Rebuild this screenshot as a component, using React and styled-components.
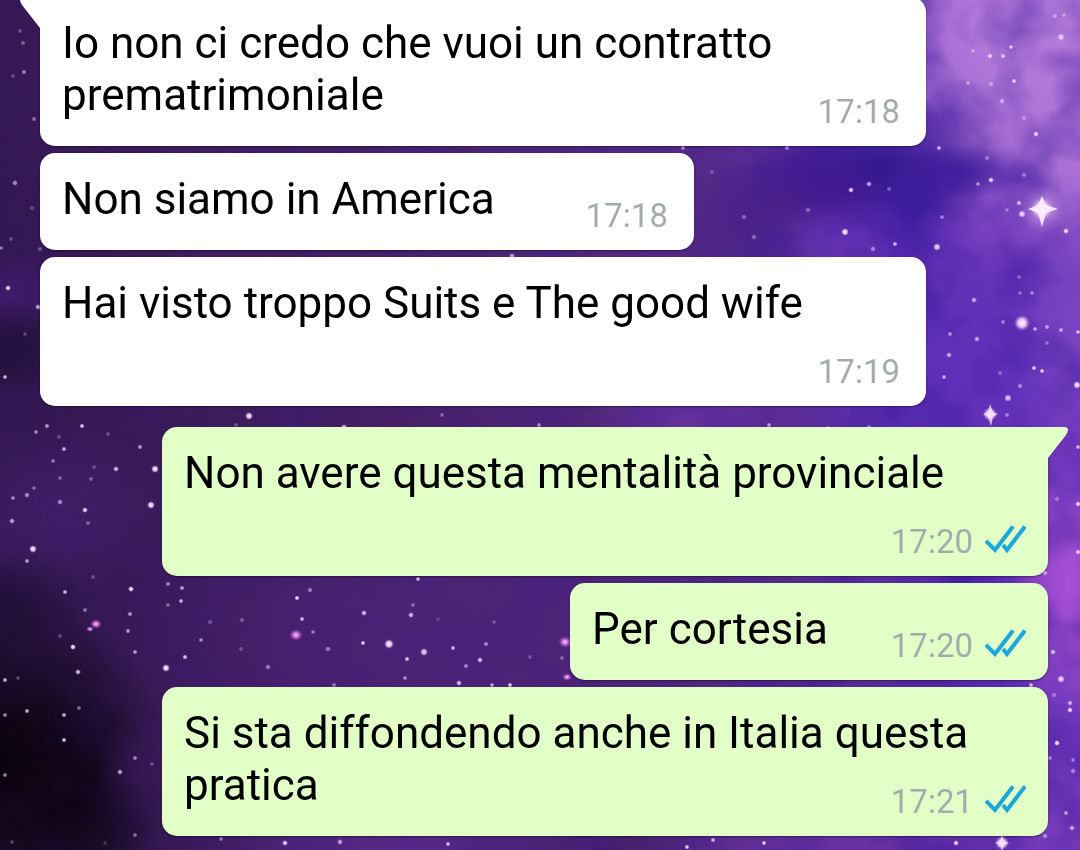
// src/App.jsx
import React from 'react';
import styled, { createGlobalStyle } from 'styled-components';

const GlobalStyle = createGlobalStyle`
  *, *::before, *::after { box-sizing: border-box; }
  body {
    margin: 0;
    background: #3a1a58;
    font-family: Roboto, 'Liberation Sans', sans-serif;
    overflow: hidden;
  }
`;

const Wallpaper = styled.svg`
  position: fixed;
  inset: 0;
  width: 100%;
  height: 100%;
`;

const Chat = styled.main`
  position: relative;
  display: flex;
  flex-direction: column;
  gap: 21px;
  padding: 0 32px 14px 40px;
  margin-top: -3px; /* scrolled slightly past the first bubble */
`;

const Group = styled.section`
  display: flex;
  flex-direction: column;
  align-items: ${({ $sent }) => ($sent ? 'flex-end' : 'flex-start')};
  gap: 7px;
`;

const Bubble = styled.article`
  position: relative;
  display: flow-root;
  max-width: calc(100% - 122px);
  padding: ${({ $sent }) => ($sent ? '20px 22px 25px 22px' : '20px 26px 25px 22px')};
  border-radius: 15px;
  border-top-left-radius: ${({ $tail, $sent }) => ($tail && !$sent ? '0' : '15px')};
  border-top-right-radius: ${({ $tail, $sent }) => ($tail && $sent ? '0' : '15px')};
  background: ${({ $sent }) => ($sent ? '#e1ffc7' : '#ffffff')};
  box-shadow: 0 1px 2px rgba(0, 0, 0, 0.4);
`;

const Tail = styled.svg`
  position: absolute;
  top: 0;
  width: 21px;
  height: 32px;
  fill: ${({ $sent }) => ($sent ? '#e1ffc7' : '#ffffff')};
  ${({ $sent }) => ($sent ? 'left: calc(100% - 1px);' : 'right: calc(100% - 1px); transform: scaleX(-1);')}
`;

const Text = styled.p`
  margin: 0;
  color: #000;
  font-size: 44px;
  line-height: 52px;
`;

const Meta = styled.span`
  float: right;
  display: flex;
  align-items: center;
  gap: 12px;
  margin: 23px 0 -11px ${({ $sent }) => ($sent ? '63px' : '91px')};
  color: #a3abab;
  font-size: 33px;
  line-height: 40px;
`;

const Ticks = styled.svg`
  width: 41px;
  height: 34px;
  fill: none;
  stroke: #1ba6dc;
  stroke-width: 4;
`;

const groups = [
  {
    sent: false,
    messages: [
      { text: 'Io non ci credo che vuoi un contratto prematrimoniale', time: '17:18' },
      { text: 'Non siamo in America', time: '17:18' },
      { text: 'Hai visto troppo Suits e The good wife', time: '17:19' },
    ],
  },
  {
    sent: true,
    messages: [
      { text: 'Non avere questa mentalità provinciale', time: '17:20' },
      { text: 'Per cortesia', time: '17:20' },
      { text: 'Si sta diffondendo anche in Italia questa pratica', time: '17:21' },
    ],
  },
];

// cx, cy, rx, ry, color, opacity
const clouds = [
  [1040, 30, 300, 210, '#c084e0', 1],
  [1080, 150, 150, 130, '#b478d8', 0.8],
  [880, 165, 130, 75, '#2f148c', 0.95],
  [960, 172, 60, 28, '#38189a', 0.8],
  [912, 225, 45, 50, '#34189c', 0.8],
  [1015, 180, 40, 22, '#5a2cae', 0.7],
  [1080, 90, 30, 36, '#7040b4', 0.8],
  [1058, 62, 40, 16, '#8d54c4', 0.6],
  [930, 120, 50, 30, '#542aa8', 0.7],
  [800, 195, 90, 50, '#44188a', 0.8],
  [740, 225, 90, 60, '#4c2382', 0.7],
  [850, 240, 80, 45, '#6a34bc', 0.7],
  [985, 235, 80, 45, '#8444c4', 0.6],
  [960, 360, 190, 150, '#6030bc', 0.8],
  [1070, 330, 60, 120, '#8048c4', 0.7],
  [1070, 580, 60, 170, '#a850d4', 1],
  [1070, 470, 50, 50, '#6a35bc', 0.7],
  [1060, 735, 50, 50, '#6530b4', 0.8],
  [1080, 830, 90, 80, '#8b45c4', 0.8],
  [700, 415, 110, 50, '#7038a4', 0.8],
  [440, 635, 330, 180, '#50247a', 0.8],
  [560, 850, 180, 50, '#3c1a64', 0.6],
  [400, 850, 220, 60, '#5a2a8c', 0.9],
  [850, 850, 210, 60, '#6e34a8', 0.8],
  [10, 295, 50, 45, '#401c6e', 0.9],
  [10, 350, 90, 50, '#211038', 0.9],
  [60, 510, 120, 90, '#43206c', 0.8],
  [0, 600, 90, 50, '#21103a', 0.9],
  [0, 760, 170, 170, '#080208', 1],
  [70, 800, 100, 110, '#0e0414', 0.9],
  [145, 770, 50, 60, '#3d1b5c', 0.7],
];

// x, y, radius, brightness
const stars = [
  [20, 31, 2, 0.3], [23, 43, 2, 0.4], [24, 72, 2, 0.6], [13, 76, 2, 0.3], [34, 119, 2, 0.5],
  [15, 183, 3, 0.6], [32, 208, 2, 0.3], [11, 239, 2, 0.3], [1, 248, 2, 0.5], [8, 288, 3, 0.9],
  [38, 307, 3, 0.7], [25, 334, 2, 0.3], [5, 377, 2, 0.8], [40, 249, 2, 0.4],
  [47, 426, 2, 0.7], [36, 432, 2, 0.6], [82, 426, 2, 0.9], [64, 449, 2, 0.8], [59, 437, 2, 0.3],
  [108, 434, 2, 0.3], [140, 447, 2, 0.7], [53, 461, 2, 0.5], [94, 467, 2, 0.3], [116, 469, 3, 0.8],
  [155, 469, 4, 1], [60, 478, 2, 0.4], [91, 479, 2, 0.4], [27, 495, 3, 0.6], [34, 488, 2, 0.4],
  [13, 498, 2, 0.6], [60, 502, 3, 0.6], [85, 510, 3, 0.9], [151, 505, 4, 1], [12, 521, 3, 0.7],
  [88, 523, 2, 0.4], [33, 549, 4, 1], [27, 561, 2, 0.7], [65, 592, 2, 0.8], [131, 589, 3, 1],
  [93, 577, 2, 0.3], [85, 610, 2, 0.5], [130, 614, 2, 0.7], [128, 631, 2, 0.7], [60, 636, 2, 0.3],
  [73, 647, 3, 1], [135, 652, 2, 0.7], [78, 672, 3, 0.8], [5, 680, 2, 0.8], [18, 678, 2, 0.3],
  [27, 711, 2, 0.8], [5, 715, 2, 0.6], [64, 715, 2, 0.8], [79, 708, 2, 0.5], [64, 740, 2, 0.9],
  [5, 775, 2, 0.6], [135, 758, 2, 0.6], [120, 772, 3, 0.7], [152, 764, 2, 0.3], [135, 835, 2, 0.5],
  [12, 842, 2, 0.3], [168, 584, 2, 0.6], [182, 588, 2, 0.7], [181, 601, 2, 0.8], [168, 605, 2, 0.4],
  [210, 622, 3, 0.3], [242, 620, 3, 0.3], [201, 640, 2, 0.6], [185, 657, 2, 0.9], [166, 668, 4, 1],
  [241, 649, 2, 0.3], [268, 667, 3, 0.5], [310, 590, 3, 0.5], [297, 598, 2, 1], [302, 619, 2, 0.8],
  [313, 632, 2, 0.5], [328, 649, 3, 0.5], [364, 613, 3, 0.8], [363, 643, 2, 0.9], [389, 644, 5, 1],
  [413, 605, 2, 0.4], [411, 615, 3, 0.8], [407, 659, 2, 0.9], [424, 652, 4, 0.9], [405, 678, 2, 0.6],
  [418, 579, 2, 0.8], [453, 648, 2, 0.8], [480, 660, 3, 0.8], [486, 644, 2, 0.6], [466, 666, 2, 0.6],
  [459, 683, 3, 0.8], [494, 622, 2, 0.3], [510, 685, 2, 0.9], [492, 685, 2, 0.7], [530, 657, 2, 0.3],
  [562, 658, 2, 0.4], [334, 685, 2, 0.5], [438, 619, 2, 0.2], [249, 416, 4, 1], [344, 427, 3, 0.8],
  [487, 429, 2, 0.4], [539, 425, 2, 0.6], [236, 425, 2, 0.3], [442, 415, 2, 0.4], [769, 425, 2, 0.7],
  [828, 428, 2, 0.5], [869, 427, 2, 0.5], [479, 429, 2, 0.6], [512, 256, 3, 0.7], [683, 148, 2, 0.6],
  [787, 148, 2, 0.6], [712, 172, 2, 0.3], [851, 190, 3, 0.9], [869, 184, 3, 0.7], [889, 189, 2, 0.4],
  [808, 210, 3, 0.4], [744, 217, 3, 0.4], [754, 237, 3, 0.4], [845, 232, 4, 1], [895, 244, 2, 0.8],
  [873, 249, 3, 0.5], [937, 247, 4, 0.9], [942, 217, 2, 0.5], [1061, 37, 4, 0.8], [1055, 16, 3, 0.5],
  [1064, 15, 2, 0.5], [973, 51, 2, 0.5], [990, 56, 3, 0.9], [1003, 56, 3, 0.7], [1011, 47, 2, 0.8],
  [968, 83, 2, 0.6], [991, 84, 3, 0.5], [1014, 81, 2, 0.9], [1002, 101, 3, 0.6], [1024, 118, 3, 0.4],
  [1036, 134, 3, 0.9], [939, 148, 2, 0.8], [987, 158, 3, 0.4], [991, 180, 3, 0.9], [978, 184, 2, 0.6],
  [1024, 175, 3, 0.4], [1019, 203, 3, 0.7], [1022, 214, 4, 0.9], [1007, 210, 2, 0.4], [1066, 231, 3, 1],
  [1019, 277, 2, 0.4], [1020, 293, 2, 0.4], [1032, 293, 2, 0.5], [974, 300, 3, 0.7], [1022, 323, 8, 1],
  [1003, 322, 2, 0.5], [1035, 329, 2, 0.7], [1047, 327, 2, 0.7], [1061, 330, 2, 0.7], [1078, 332, 2, 0.8],
  [1047, 343, 2, 0.4], [950, 334, 2, 0.6], [977, 339, 3, 0.7], [949, 355, 3, 0.7], [944, 377, 2, 0.7],
  [1034, 368, 2, 0.9], [1042, 371, 2, 0.9], [1000, 373, 2, 0.4], [1020, 386, 3, 0.5], [1008, 398, 4, 0.8],
  [1077, 385, 4, 1], [990, 414, 7, 1], [1007, 415, 2, 0.5], [1078, 447, 2, 0.8], [1057, 499, 3, 0.4],
  [1078, 504, 3, 0.9], [1078, 552, 3, 0.8], [1045, 573, 3, 0.6], [1053, 652, 3, 0.8], [1061, 679, 4, 0.9],
  [1070, 703, 3, 0.7], [1070, 710, 3, 0.9], [1054, 695, 3, 0.4], [1057, 743, 3, 1], [1073, 760, 2, 0.5],
  [1073, 771, 3, 0.5], [1050, 758, 2, 0.5], [1066, 813, 2, 0.7], [1072, 828, 3, 0.7], [1045, 836, 3, 0.5],
  [1031, 685, 2, 0.8], [285, 843, 3, 0.9], [340, 842, 3, 0.7], [448, 844, 2, 0.8], [221, 839, 2, 0.5],
  [687, 847, 2, 0.9], [713, 840, 2, 0.8], [764, 843, 2, 0.9], [956, 843, 3, 0.9], [1002, 843, 7, 1],
  [105, 843, 2, 0.2],
];

const pinkStars = [
  [96, 624, 5], [90, 629, 3], [296, 635, 6], [565, 642, 6], [567, 677, 4],
];

function GalaxyWallpaper() {
  return (
    <Wallpaper viewBox="0 0 1080 850" preserveAspectRatio="xMidYMid slice" aria-hidden="true">
      <defs>
        <linearGradient id="sky" x1="0" y1="0.3" x2="1" y2="0.15">
          <stop offset="0" stopColor="#331850" />
          <stop offset="0.35" stopColor="#472069" />
          <stop offset="0.65" stopColor="#562b88" />
          <stop offset="0.82" stopColor="#5a2cae" />
          <stop offset="1" stopColor="#7a40c0" />
        </linearGradient>
        {clouds.map(([, , , , color, opacity], i) => (
          <radialGradient id={`cloud${i}`} key={i}>
            <stop offset="0" stopColor={color} stopOpacity={opacity} />
            <stop offset="0.5" stopColor={color} stopOpacity={opacity * 0.6} />
            <stop offset="1" stopColor={color} stopOpacity="0" />
          </radialGradient>
        ))}
        <radialGradient id="star">
          <stop offset="0" stopColor="#fff2ff" />
          <stop offset="0.5" stopColor="#f2d6fc" stopOpacity="0.9" />
          <stop offset="1" stopColor="#c080e8" stopOpacity="0" />
        </radialGradient>
        <radialGradient id="pinkStar">
          <stop offset="0" stopColor="#ffd8ff" />
          <stop offset="0.4" stopColor="#e488f0" stopOpacity="0.8" />
          <stop offset="1" stopColor="#a030c0" stopOpacity="0" />
        </radialGradient>
        <linearGradient id="wispFade">
          <stop offset="0" stopColor="#fff" stopOpacity="0.1" />
          <stop offset="0.6" stopColor="#fff" stopOpacity="0.3" />
          <stop offset="0.85" stopColor="#fff" stopOpacity="0.6" />
          <stop offset="1" stopColor="#fff" stopOpacity="0.5" />
        </linearGradient>
        <mask id="wispMask">
          <rect width="1080" height="850" fill="url(#wispFade)" />
        </mask>
        <filter id="wisps" x="0" y="0" width="100%" height="100%" colorInterpolationFilters="sRGB">
          <feTurbulence type="fractalNoise" baseFrequency="0.018" numOctaves="3" seed="7" />
          <feColorMatrix values="0 0 0 0 0.22  0 0 0 0 0.09  0 0 0 0 0.6  2 0 0 0 -0.8" />
        </filter>
      </defs>
      <rect width="1080" height="850" fill="url(#sky)" />
      {clouds.map(([cx, cy, rx, ry], i) => (
        <ellipse key={i} cx={cx} cy={cy} rx={rx} ry={ry} fill={`url(#cloud${i})`} />
      ))}
      <g mask="url(#wispMask)">
        <rect width="1080" height="850" filter="url(#wisps)" />
      </g>
      {stars.map(([x, y, r, brightness], i) => (
        <circle key={i} cx={x} cy={y} r={r > 2 ? r : 2.6} fill="url(#star)" opacity={brightness} />
      ))}
      {pinkStars.map(([x, y, r], i) => (
        <ellipse key={i} cx={x} cy={y} rx={r + 1} ry={r} fill="url(#pinkStar)" />
      ))}
      <circle cx="1042" cy="209" r="24" fill="url(#star)" opacity="0.25" />
      <circle cx="1042" cy="209" r="12" fill="url(#star)" />
      <path d="M1042 196l4 9 12 4-12 4-4 14-4-14-10-4 10-4z" fill="#fdeeff" opacity="0.9" />
      <path d="M990 404l3 8 5 2-5 3-2 9-3-9-5-3 5-2z" fill="#f8e0ff" opacity="0.8" />
      <path d="M1002 834l2 7 5 2-5 2-2 6-2-6-5-2 5-2z" fill="#f8e0ff" opacity="0.8" />
    </Wallpaper>
  );
}

function Message({ text, time, sent, tail }) {
  return (
    <Bubble $sent={sent} $tail={tail}>
      {tail && (
        <Tail $sent={sent} viewBox="0 0 21 32" aria-hidden="true">
          <path d="M0 0H17Q21 0 21 3Q21 5 19 8L1 31V32H0Z" />
        </Tail>
      )}
      <Text>
        {text}
        <Meta $sent={sent}>
          <time>{time}</time>
          {sent && (
            <Ticks viewBox="0 0 41 34" role="img" aria-label="Letto">
              <path d="M1 16L10 25L28 1.500" />
              <path d="M18 20L22 25L40 1.500" />
            </Ticks>
          )}
        </Meta>
      </Text>
    </Bubble>
  );
}

function App() {
  return (
    <>
      <GlobalStyle />
      <GalaxyWallpaper />
      <Chat>
        {groups.map((group, g) => (
          <Group key={g} $sent={group.sent}>
            {group.messages.map((message, i) => (
              <Message key={i} {...message} sent={group.sent} tail={i === 0} />
            ))}
          </Group>
        ))}
      </Chat>
    </>
  );
}

export default App;
